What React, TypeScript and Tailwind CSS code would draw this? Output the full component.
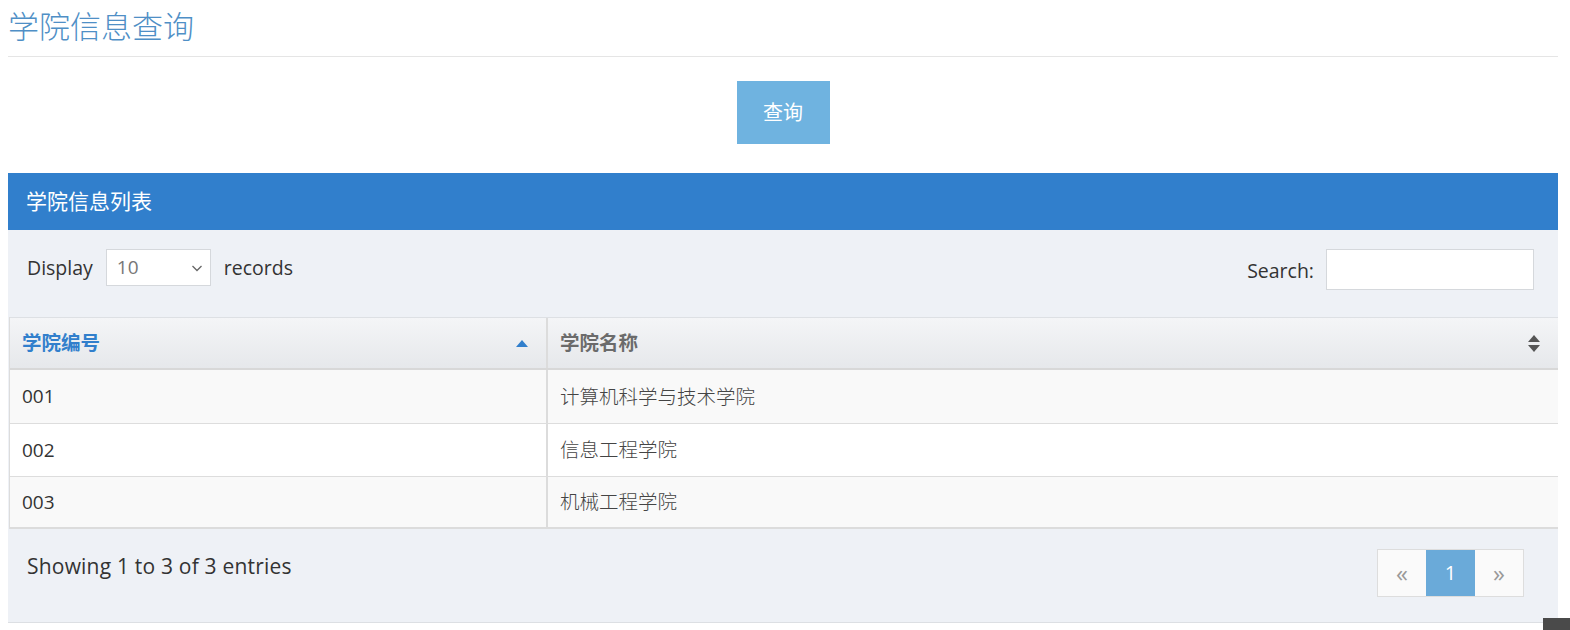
import React from 'react';

const rows = [
  { id: '001', name: '计算机科学与技术学院' },
  { id: '002', name: '信息工程学院' },
  { id: '003', name: '机械工程学院' },
];

const font = { fontFamily: '"Open Sans", "Noto Sans CJK SC", sans-serif' };

const App: React.FC = () => {
  return (
    <div className="min-h-screen w-full bg-white pl-2 pr-[12px] text-[#333]" style={font}>
      {/* title */}
      <div className="h-[57px] flex items-center border-b border-[#e5e5e5]">
        <h1 className="text-[31px] font-light text-[#4f8fc6] leading-none -mt-[3px]">学院信息查询</h1>
      </div>

      {/* query button */}
      <div className="flex justify-center mt-[24px]">
        <button className="w-[93px] h-[63px] bg-[#6fb3e0] text-white text-[20px]">查询</button>
      </div>

      {/* panel */}
      <div className="mt-[29px]">
        <div className="h-[57px] bg-[#317fcc] flex items-center px-[18px]">
          <span className="text-white text-[21px]">学院信息列表</span>
        </div>

        <div className="bg-[#eef1f6] border-b border-[#dcdfe3]">
          {/* controls */}
          <div className="flex items-start justify-between pl-[19px] pr-[24px] pt-[19px] h-[87px]">
            <div className="flex items-center gap-[13px] text-[19.5px] text-[#333]">
              <span>Display</span>
              <div className="w-[105px] h-[37px] bg-white border border-[#d5d8dc] flex items-center justify-between pl-[10px] pr-[6px]">
                <span className="text-[#777] text-[19px]">10</span>
                <svg width="14" height="14" viewBox="0 0 14 14" fill="none" stroke="#666" strokeWidth="1.3">
                  <path d="M2.5 5 L7 9.5 L11.5 5" />
                </svg>
              </div>
              <span>records</span>
            </div>
            <div className="flex items-center gap-[12px] text-[19.5px] text-[#333]">
              <span className="mt-[3px]">Search:</span>
              <input className="w-[208px] h-[41px] bg-white border border-[#d5d8dc] outline-none" />
            </div>
          </div>

          {/* table */}
          <div className="ml-[1px] border-l border-[#dcdcdc]">
            <div className="flex h-[53px] bg-gradient-to-b from-[#f4f5f7] to-[#e6e8eb] border-t border-[#dde0e4] border-b-[2px] border-b-[#d8d8d8]">
              <div className="w-[538px] flex items-center justify-between pl-[12px] pr-[18px] border-r-[2px] border-[#dcdcdc]">
                <span className="text-[19.5px] font-bold text-[#317fcc]">学院编号</span>
                <svg width="12" height="7" viewBox="0 0 12 7">
                  <path d="M0 7 L6 0 L12 7 Z" fill="#317fcc" />
                </svg>
              </div>
              <div className="flex-1 flex items-center justify-between pl-[12px] pr-[18px]">
                <span className="text-[19.5px] font-bold text-[#6b6b6b]">学院名称</span>
                <svg width="12" height="17" viewBox="0 0 12 17">
                  <path d="M0 7 L6 0 L12 7 Z" fill="#555" />
                  <path d="M0 10 L6 17 L12 10 Z" fill="#555" />
                </svg>
              </div>
            </div>
            {rows.map((r, i) => (
              <div
                key={r.id}
                className={`flex h-[53px] ${i > 0 ? 'border-t border-[#dddddd]' : ''} ${i === rows.length - 1 ? 'border-b-[2px] border-b-[#dcdcdc]' : ''} ${i % 2 === 0 ? 'bg-[#f9f9f9]' : 'bg-white'}`}
              >
                <div className="w-[538px] flex items-center pl-[12px] border-r-[2px] border-[#dcdcdc] text-[19px] text-[#333]">
                  {r.id}
                </div>
                <div className="flex-1 flex items-center pl-[12px] text-[19.5px] text-[#444] font-light">
                  {r.name}
                </div>
              </div>
            ))}
          </div>

          {/* footer */}
          <div className="flex items-start justify-between pl-[19px] pr-[34px] h-[93px]">
            <div className="text-[21px] tracking-[0.2px] text-[#333] mt-[22px]">Showing 1 to 3 of 3 entries</div>
            <div className="flex mt-[20px] border border-[#dddddd] h-[48px]">
              <div className="w-[48px] flex items-center justify-center bg-[#fafafa] text-[#999] text-[24px]">«</div>
              <div className="w-[49px] flex items-center justify-center bg-[#6aaad9] text-white text-[20px]">1</div>
              <div className="w-[48px] flex items-center justify-center bg-[#fafafa] text-[#999] text-[24px]">»</div>
            </div>
          </div>
        </div>
      </div>

      {/* back to top button, partly visible */}
      <div className="fixed right-0 top-[618px] w-[27px] h-[40px] bg-[#4a4a4a]" />
    </div>
  );
};

export default App;
